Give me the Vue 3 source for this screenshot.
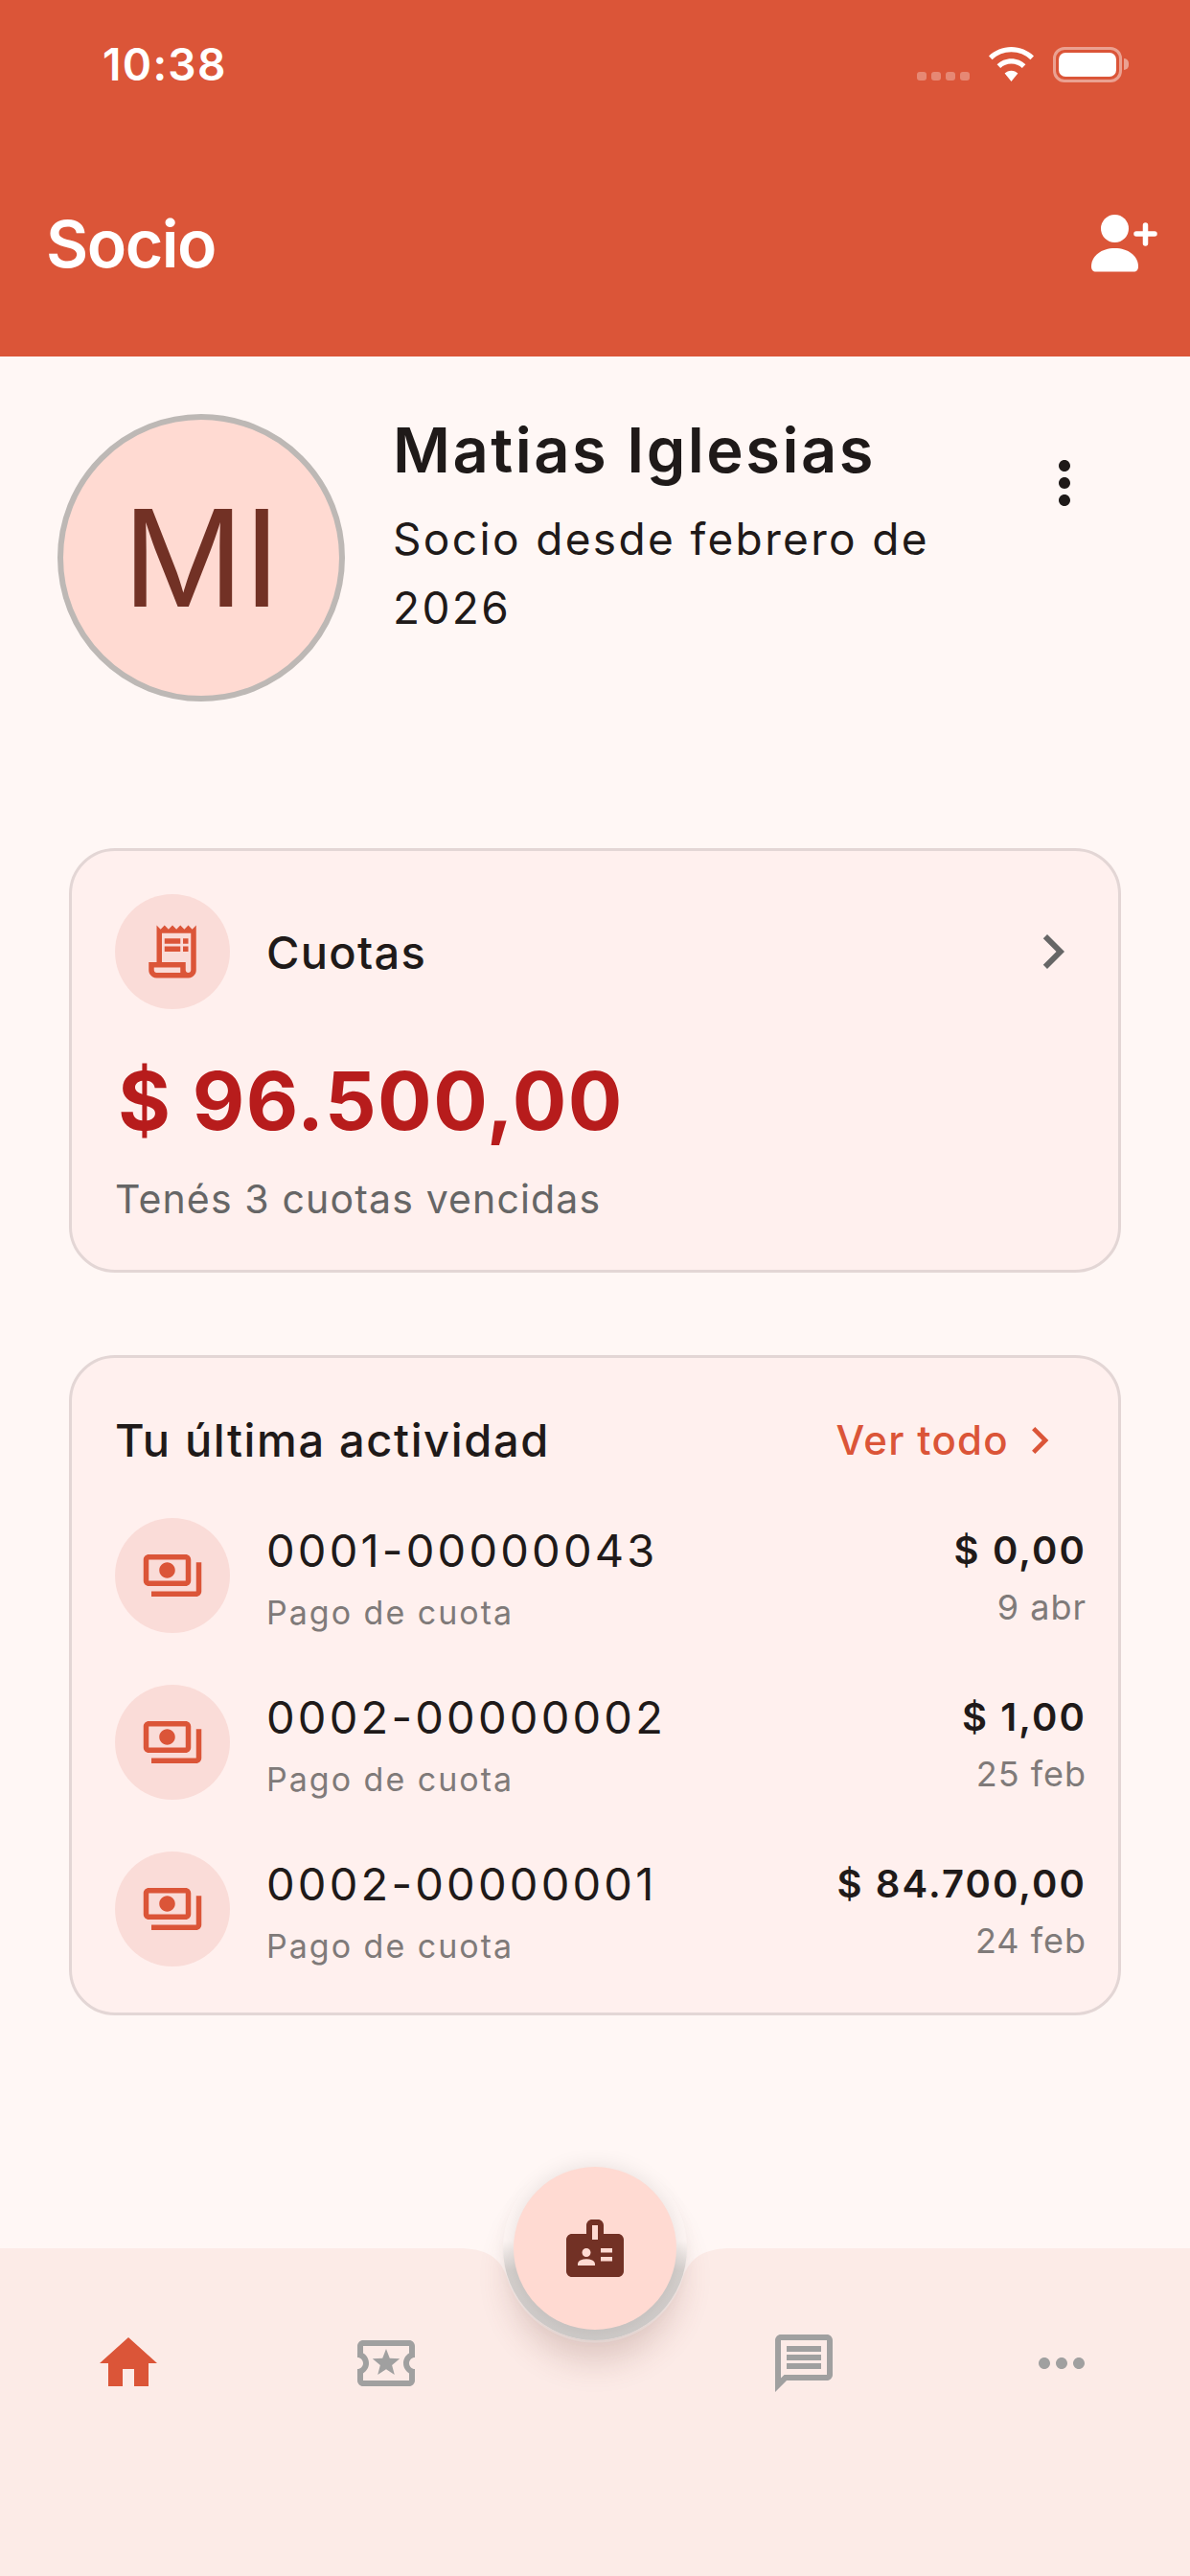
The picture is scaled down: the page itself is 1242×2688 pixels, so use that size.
<script setup>
const rows = [
  { id: '0001-00000043', amount: '$ 0,00', date: '9 abr' },
  { id: '0002-00000002', amount: '$ 1,00', date: '25 feb' },
  { id: '0002-00000001', amount: '$ 84.700,00', date: '24 feb' },
]
</script>

<template>
  <div class="page">
    <header class="header">
      <div class="status">
        <span class="time">10:38</span>
        <div class="status-icons">
          <div class="cell"><i></i><i></i><i></i><i></i></div>
          <svg class="wifi" viewBox="0 0 47 36"><path fill="#fff" d="M23.5 0C32.6 0 40.8 3.6 47 9.4L43.4 13.2C38.2 8.3 31.2 5.3 23.5 5.3S8.8 8.3 3.6 13.2L0 9.4C6.2 3.6 14.4 0 23.5 0ZM23.5 12.3C29.3 12.3 34.5 14.6 38.4 18.3L34.8 22.1C31.9 19.3 27.9 17.6 23.5 17.6S15.1 19.3 12.2 22.1L8.6 18.3C12.5 14.6 17.7 12.3 23.5 12.3ZM23.5 24.8C26.2 24.8 28.6 25.9 30.4 27.6L23.5 36 16.6 27.6C18.4 25.9 20.8 24.8 23.5 24.8Z"/></svg>
          <div class="battery"><div class="battery-fill"></div></div>
          <span class="battery-cap"></span>
        </div>
      </div>
      <div class="appbar">
        <h1 class="title">Socio</h1>
        <svg class="add-user" viewBox="0 0 70 60"><circle cx="24.5" cy="14.500" r="14.500" fill="#fff"/><path fill="#fff" d="M0 54C0 43 10.500 35 24.500 35S49 43 49 54C49 57.500 47.500 59.500 44 59.500H5C1.500 59.500 0 57.500 0 54Z"/><path stroke="#fff" stroke-width="5.500" stroke-linecap="round" d="M47 20H66M56.500 11V30" fill="none"/></svg>
      </div>
    </header>

    <main class="main">
      <section class="profile">
        <div class="avatar">MI</div>
        <div class="info">
          <div class="name">Matias Iglesias</div>
          <div class="since">Socio desde febrero de 2026</div>
        </div>
        <svg class="more" viewBox="0 0 24 24"><path fill="#1f1a19" d="M12 8c1.100 0 2-.9 2-2s-.9-2-2-2-2 .9-2 2 .9 2 2 2zm0 2c-1.100 0-2 .9-2 2s.9 2 2 2 2-.9 2-2-.9-2-2-2zm0 6c-1.100 0-2 .9-2 2s.9 2 2 2 2-.9 2-2-.9-2-2-2z"/></svg>
      </section>

      <section class="card dues">
        <div class="dues-head">
          <div class="bubble">
            <svg class="bubble-icon" viewBox="0 0 24 24"><path fill="#db5538" fill-rule="evenodd" d="M19.500 3.500L18 2l-1.500 1.500L15 2l-1.500 1.500L12 2l-1.500 1.500L9 2L7.500 3.500L6 2v14H3v3c0 1.660 1.340 3 3 3h12c1.660 0 3-1.340 3-3V2L19.500 3.500zM15 20H6c-.55 0-1-.45-1-1v-1h10V20zM19 19c0 .55-.45 1-1 1s-1-.45-1-1v-3H8V5h11V19zM9 7h6v2H9zM16 7h2v2h-2zM9 10h6v2H9zM16 10h2v2h-2z"/></svg>
          </div>
          <span class="dues-label">Cuotas</span>
          <svg class="chev" viewBox="0 0 24 24"><path fill="#666" d="M10 6L8.590 7.410 13.170 12l-4.580 4.590L10 18l6-6z"/></svg>
        </div>
        <div class="dues-amount">$ 96.500,00</div>
        <div class="dues-note">Tenés 3 cuotas vencidas</div>
      </section>

      <section class="card activity">
        <div class="activity-head">
          <span class="activity-title">Tu última actividad</span>
          <span class="see-all">Ver todo</span>
          <svg class="see-chev" viewBox="0 0 24 24"><path fill="#db5538" d="M10 6L8.590 7.410 13.170 12l-4.580 4.590L10 18l6-6z"/></svg>
        </div>
        <div class="rows">
          <div v-for="r in rows" :key="r.id" class="row">
            <div class="bubble">
              <svg class="bubble-icon" viewBox="0 0 24 24"><path fill="#db5538" d="M19 14V6c0-1.100-.9-2-2-2H3c-1.100 0-2 .9-2 2v8c0 1.100.9 2 2 2h14c1.100 0 2-.9 2-2zm-2 0H3V6h14v8zm-7-7c-1.660 0-3 1.340-3 3s1.340 3 3 3 3-1.340 3-3-1.340-3-3-3zm13 0v11c0 1.100-.9 2-2 2H4v-2h17V7h2z"/></svg>
            </div>
            <div class="row-main">
              <div class="row-id">{{ r.id }}</div>
              <div class="row-sub">Pago de cuota</div>
            </div>
            <div class="row-side">
              <div class="row-amount">{{ r.amount }}</div>
              <div class="row-date">{{ r.date }}</div>
            </div>
          </div>
        </div>
      </section>
    </main>

    <nav class="nav">
      <svg class="nav-bg" viewBox="0 0 1242 342"><path fill="#fcebe7" d="M0 0H478C508 0 522 10 529 30A96 96 0 0 0 713 30C720 10 734 0 764 0H1242V342H0Z"/></svg>
      <div class="nav-item"><svg viewBox="0 0 24 24"><path fill="#db5538" d="M10 20v-6h4v6h5v-8h3L12 3 2 12h3v8z"/></svg></div>
      <div class="nav-item"><svg viewBox="0 0 24 24"><path fill="#a0a0a0" d="M22 10V6c0-1.110-.9-2-2-2H4c-1.100 0-1.990.89-1.990 2v4c1.100 0 1.990.9 1.990 2s-.89 2-2 2v4c0 1.100.9 2 2 2h16c1.100 0 2-.9 2-2v-4c-1.100 0-2-.9-2-2s.9-2 2-2zm-2-1.460c-1.190.69-2 1.990-2 3.460s.81 2.770 2 3.460V18H4v-2.540c1.190-.69 2-1.990 2-3.460 0-1.480-.8-2.770-1.990-3.460L4 6h16v2.540zM9.070 16L12 14.120 14.930 16l-.89-3.360 2.690-2.200-3.470-.21L12 7l-1.270 3.220-3.470.21 2.690 2.200z"/></svg></div>
      <div class="nav-gap"></div>
      <div class="nav-item"><svg viewBox="0 0 24 24"><path fill="#a0a0a0" d="M20 2H4c-1.100 0-1.990.9-1.990 2L2 22l4-4h14c1.100 0 2-.9 2-2V4c0-1.100-.9-2-2-2zm0 14H5.170L4 17.170V4h16v12zM6 12h12v2H6zm0-3h12v2H6zm0-3h12v2H6z"/></svg></div>
      <div class="nav-item"><svg viewBox="0 0 24 24"><path fill="#a0a0a0" d="M6 10c-1.100 0-2 .9-2 2s.9 2 2 2 2-.9 2-2-.9-2-2-2zm12 0c-1.100 0-2 .9-2 2s.9 2 2 2 2-.9 2-2-.9-2-2-2zm-6 0c-1.100 0-2 .9-2 2s.9 2 2 2 2-.9 2-2-.9-2-2-2z"/></svg></div>
      <div class="well"></div>
      <div class="fab">
        <svg viewBox="0 0 24 24"><path fill="#723125" d="M20 7h-5V4c0-1.100-.9-2-2-2h-2c-1.100 0-2 .9-2 2v3H4c-1.100 0-2 .9-2 2v11c0 1.100.9 2 2 2h16c1.100 0 2-.9 2-2V9c0-1.100-.9-2-2-2zM9 12c.83 0 1.500.67 1.500 1.500S9.830 15 9 15s-1.500-.67-1.500-1.500S8.170 12 9 12zm3 6H6v-.43c0-.6.36-1.150.92-1.390.64-.28 1.340-.43 2.080-.43s1.440.15 2.080.43c.55.24.92.78.92 1.390V18zm1-9h-2V4h2v5zm5 7.500h-4V15h4v1.500zm0-3h-4V12h4v1.500z"/></svg>
      </div>
    </nav>
  </div>
</template>

<style>
html, body { margin: 0; background: #fff7f5; }
</style>

<style scoped>
.page {
  width: 1242px;
  height: 2688px;
  display: flex;
  flex-direction: column;
  background: #fff7f5;
  font-family: Inter, "Liberation Sans", sans-serif;
  color: #1f1a19;
  overflow: hidden;
}
.header {
  height: 372px;
  flex: none;
  background: #db5538;
  display: flex;
  flex-direction: column;
  color: #fff;
}
.status {
  height: 136px;
  flex: none;
  display: flex;
  justify-content: space-between;
  padding: 40px 64px 0 107px;
  box-sizing: border-box;
}
.time { font-size: 46px; font-weight: 600; line-height: 54px; letter-spacing: 1.3px; }
.status-icons { display: flex; align-items: flex-start; padding-top: 9px; }
.cell { display: flex; gap: 5px; margin: 26px 20px 0 0; }
.cell i { width: 10px; height: 9px; border-radius: 3px; background: rgba(255,255,255,.3); }
.wifi { width: 47px; height: 36px; margin-right: 20px; }
.battery {
  width: 72px; height: 37px; box-sizing: border-box;
  border: 3px solid rgba(255,255,255,.45);
  border-radius: 12px; padding: 3px;
}
.battery-fill { height: 100%; background: #fff; border-radius: 7px; }
.battery-cap {
  width: 5px; height: 12px; margin: 12px 0 0 2px;
  background: rgba(255,255,255,.45); border-radius: 0 6px 6px 0;
}
.appbar {
  flex: 1;
  display: flex; align-items: center; justify-content: space-between;
  padding: 0 33px 0 48px;
}
.title { margin: 0; font-size: 68px; font-weight: 600; line-height: 84px; letter-spacing: -1.5px; }
.add-user { width: 70px; height: 60px; }

.main { flex: 1; display: flex; flex-direction: column; padding: 60px 72px 0; }
.profile { display: flex; margin: 0 0 153px -12px; height: 300px; flex: none; }
.avatar {
  width: 300px; height: 300px; box-sizing: border-box; flex: none;
  border: 6px solid #bdb8b5; border-radius: 50%;
  background: #ffdad2; color: #723125;
  display: flex; align-items: center; justify-content: center;
  font-size: 140px; line-height: 1;
}
.info { flex: 1; margin-left: 50px; }
.name { font-size: 65px; font-weight: 600; line-height: 76px; letter-spacing: 2.5px; }
.since { max-width: 610px; font-size: 46px; line-height: 72px; letter-spacing: 2.35px; margin-top: 18px; }
.more { width: 72px; height: 72px; margin: 36px 23px 0 0; flex: none; }

.card {
  background: #fff0ee;
  border: 3px solid #e3d6d5;
  border-radius: 48px;
  box-sizing: border-box;
  flex: none;
}
.dues { height: 443px; padding: 45px 32px 0 45px; margin-bottom: 86px; }
.dues-head { display: flex; align-items: center; }
.bubble {
  width: 120px; height: 120px; border-radius: 50%; background: #fadcd8; flex: none;
  display: flex; align-items: center; justify-content: center;
}
.bubble-icon { width: 66px; height: 66px; }
.dues-label { flex: 1; margin-left: 38px; font-size: 47px; font-weight: 500; letter-spacing: 1.3px; }
.chev { width: 72px; height: 72px; }
.dues-amount { font-size: 84px; font-weight: 700; line-height: 100px; color: #b71c1c; margin-top: 46px; letter-spacing: 1.4px; padding-left: 3px; }
.dues-note { font-size: 41px; line-height: 50px; color: #666; letter-spacing: 1.15px; margin-top: 27px; }

.activity { height: 689px; padding: 0 33px 0 45px; }
.activity-head { display: flex; align-items: center; height: 167px; box-sizing: border-box; padding-top: 4px; }
.activity-title { flex: 1; font-size: 47px; font-weight: 500; letter-spacing: 1.63px; }
.see-all { font-size: 42px; font-weight: 500; color: #db5538; letter-spacing: 1.3px; }
.see-chev { width: 56px; height: 56px; margin: 0 21px 0 4px; }
.rows { display: flex; flex-direction: column; gap: 54px; }
.row { display: flex; align-items: center; height: 120px; }
.row-main { flex: 1; margin-left: 38px; padding-top: 7px; }
.row-id { font-size: 47px; line-height: 56px; letter-spacing: 3.2px; }
.row-sub { font-size: 34px; line-height: 44px; letter-spacing: 2px; color: #7f7a79; margin-top: 15px; }
.row-side { text-align: right; }
.row-amount { font-size: 40px; font-weight: 600; line-height: 56px; letter-spacing: 2.1px; }
.row-date { font-size: 36px; line-height: 44px; letter-spacing: 1px; color: #7f7a79; margin-top: 9px; }

.nav {
  position: relative;
  flex: none;
  height: 342px;
  display: grid;
  grid-template-columns: 1fr 1fr 168px 1fr 1fr;
  align-items: start;
  padding-top: 84px;
  box-sizing: border-box;
}
.nav-bg { position: absolute; left: 0; top: 0; width: 1242px; height: 342px; z-index: 0; }
.nav-item { display: flex; justify-content: center; position: relative; }
.nav-item svg { width: 72px; height: 72px; display: block; }
.well {
  position: absolute; left: 525px; top: -96px; width: 192px; height: 192px; border-radius: 50%;
  background: linear-gradient(to bottom, rgba(200,196,193,0) 46%, rgba(200,196,193,.75) 62%, #cfcbc9 100%);
  box-shadow: 0 30px 34px -8px rgba(110,60,50,.2);
}
.fab {
  position: absolute; left: 536px; top: -85px; width: 170px; height: 170px; border-radius: 50%;
  background: #ffdad2;
  display: flex; align-items: center; justify-content: center;
  box-shadow: 0 0 22px rgba(0,0,0,.1);
}
.fab svg { width: 72px; height: 72px; }
</style>
